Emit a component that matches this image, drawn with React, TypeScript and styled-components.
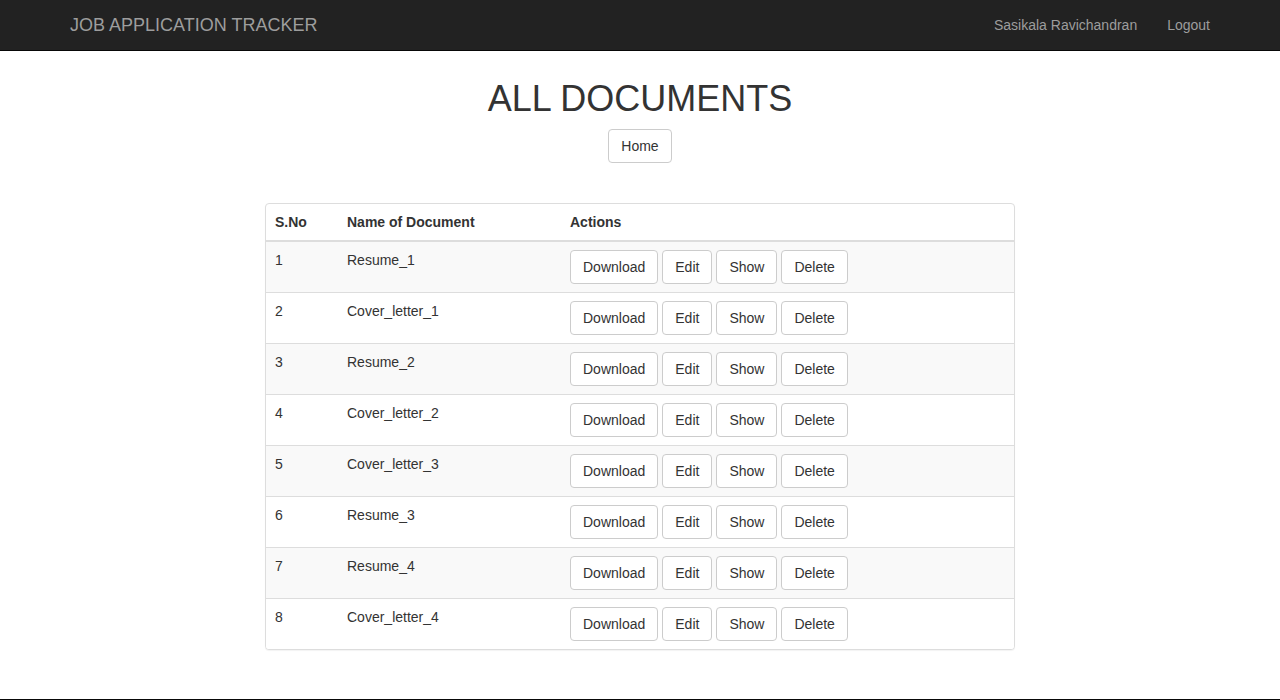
import React from "react";
import styled, { createGlobalStyle } from "styled-components";

const GlobalStyle = createGlobalStyle`
  html, body { margin: 0; padding: 0; background: #fff; }
  body {
    font-family: "Liberation Sans", Arial, Helvetica, sans-serif;
    font-size: 14px;
    line-height: 20px;
    color: #333;
  }
  * { box-sizing: border-box; }
`;

const Navbar = styled.nav`
  background: #222;
  border-bottom: 1px solid #080808;
  height: 51px;
`;

const NavContainer = styled.div`
  width: 1170px;
  margin: 0 auto;
  display: flex;
  justify-content: space-between;
  align-items: stretch;
  height: 50px;
`;

const Brand = styled.a`
  display: block;
  padding: 15px;
  font-size: 18px;
  line-height: 20px;
  color: #9d9d9d;
  text-decoration: none;
`;

const NavList = styled.ul`
  display: flex;
  list-style: none;
  margin: 0;
  padding: 0;
`;

const NavLink = styled.a`
  display: block;
  padding: 15px;
  line-height: 20px;
  font-size: 14px;
  color: #9d9d9d;
  text-decoration: none;
`;

const Main = styled.main`
  display: flex;
  flex-direction: column;
  align-items: center;
  min-height: 648px;
`;

const Title = styled.h1`
  margin: 28px 0 10px;
  font-size: 36px;
  font-weight: 500;
  line-height: 39.6px;
  color: #333;
  text-align: center;
`;

const Button = styled.button`
  display: inline-block;
  height: 34px;
  padding: 6px 12px;
  font-family: inherit;
  font-size: 14px;
  line-height: 20px;
  color: #333;
  background: #fff;
  border: 1px solid #ccc;
  border-radius: 4px;
  cursor: pointer;
  white-space: nowrap;
`;

const Panel = styled.div`
  width: 750px;
  margin-top: 40px;
  border: 1px solid #ddd;
  border-radius: 4px;
  background: #fff;
  box-shadow: 0 1px 1px rgba(0, 0, 0, 0.05);
  overflow: hidden;
`;

const Table = styled.table`
  width: 100%;
  border-collapse: collapse;
  border-spacing: 0;
`;

const Th = styled.th<{ $w?: number }>`
  text-align: left;
  font-weight: bold;
  padding: 8px 8px 8px 9px;
  line-height: 20px;
  border-bottom: 2px solid #ddd;
  vertical-align: bottom;
  width: ${(p) => (p.$w ? `${p.$w}px` : "auto")};
`;

const Tr = styled.tr<{ $striped: boolean }>`
  background: ${(p) => (p.$striped ? "#f9f9f9" : "#fff")};
  &:not(:first-child) > td { border-top: 1px solid #ddd; }
`;

const Td = styled.td`
  padding: 8px 8px 8px 9px;
  line-height: 20px;
  vertical-align: top;
`;

const Actions = styled.div`
  display: flex;
  gap: 4px;
`;

const Footer = styled.footer`
  height: 40px;
  background: #222;
  border-top: 1px solid #080808;
`;

const docs = [
  "Resume_1",
  "Cover_letter_1",
  "Resume_2",
  "Cover_letter_2",
  "Cover_letter_3",
  "Resume_3",
  "Resume_4",
  "Cover_letter_4",
];

export default function App() {
  return (
    <>
      <GlobalStyle />
      <Navbar>
        <NavContainer>
          <Brand href="#">JOB APPLICATION TRACKER</Brand>
          <NavList>
            <li>
              <NavLink href="#">Sasikala Ravichandran</NavLink>
            </li>
            <li>
              <NavLink href="#">Logout</NavLink>
            </li>
          </NavList>
        </NavContainer>
      </Navbar>
      <Main>
        <Title>ALL DOCUMENTS</Title>
        <Button>Home</Button>
        <Panel>
          <Table>
            <thead>
              <tr>
                <Th $w={72}>S.No</Th>
                <Th $w={223}>Name of Document</Th>
                <Th>Actions</Th>
              </tr>
            </thead>
            <tbody>
              {docs.map((d, i) => (
                <Tr key={d} $striped={i % 2 === 0}>
                  <Td>{i + 1}</Td>
                  <Td>{d}</Td>
                  <Td>
                    <Actions>
                      <Button>Download</Button>
                      <Button>Edit</Button>
                      <Button>Show</Button>
                      <Button>Delete</Button>
                    </Actions>
                  </Td>
                </Tr>
              ))}
            </tbody>
          </Table>
        </Panel>
      </Main>
      <Footer />
    </>
  );
}
